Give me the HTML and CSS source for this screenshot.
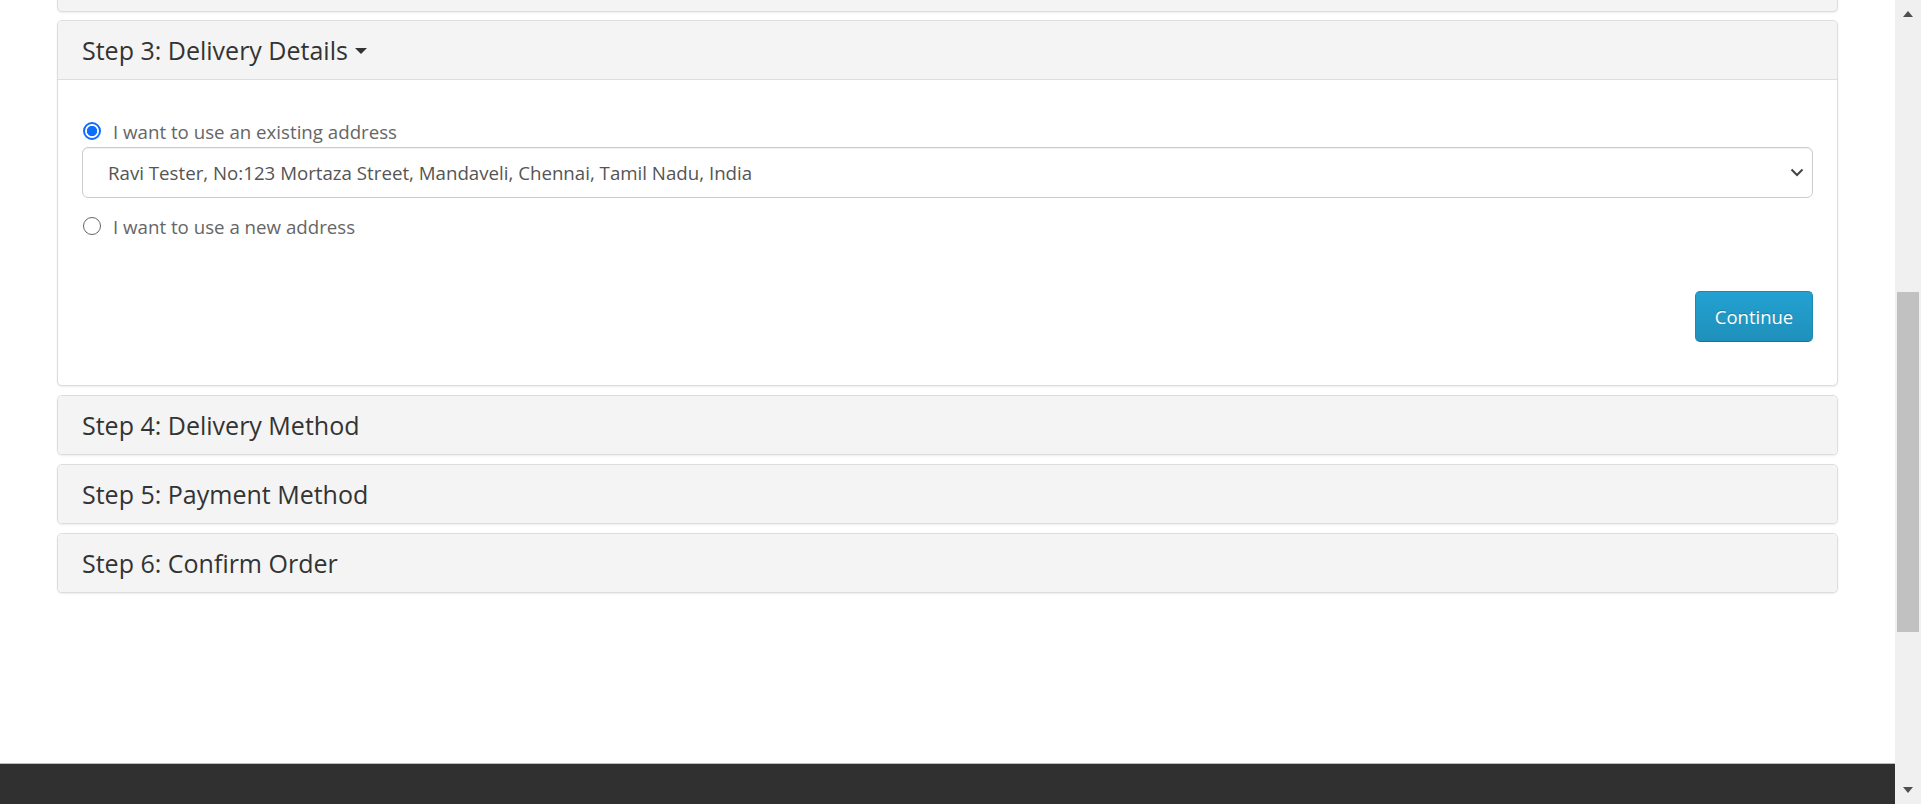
FILE: index.html
```html
<!DOCTYPE html>
<html lang="en">
<head>
<meta charset="utf-8">
<title>Checkout</title>
<link rel="stylesheet" href="styles.css">
</head>
<body>
<div class="page">
  <main class="content">
    <div class="panel panel-prev"></div>

    <section class="panel">
      <div class="panel-heading">
        <h4 class="panel-title">Step 3: Delivery Details <span class="caret"></span></h4>
      </div>
      <div class="panel-body">
        <label class="radio-row">
          <span class="radio radio-checked"></span>
          <span class="radio-label">I want to use an existing address</span>
        </label>
        <div class="select">
          <span class="select-text">Ravi Tester, No:123 Mortaza Street, Mandaveli, Chennai, Tamil Nadu, India</span>
          <svg class="chevron" width="14" height="9" viewBox="0 0 14 9"><path d="M1.5 1.5 L7 7 L12.5 1.5" fill="none" stroke="#444" stroke-width="2"/></svg>
        </div>
        <label class="radio-row radio-row-new">
          <span class="radio"></span>
          <span class="radio-label">I want to use a new address</span>
        </label>
        <div class="buttons">
          <button class="btn-primary" type="button">Continue</button>
        </div>
      </div>
    </section>

    <section class="panel panel-closed">
      <div class="panel-heading"><h4 class="panel-title">Step 4: Delivery Method</h4></div>
    </section>
    <section class="panel panel-closed">
      <div class="panel-heading"><h4 class="panel-title">Step 5: Payment Method</h4></div>
    </section>
    <section class="panel panel-closed">
      <div class="panel-heading"><h4 class="panel-title">Step 6: Confirm Order</h4></div>
    </section>
  </main>
  <footer class="footer"></footer>
</div>
<div class="scrollbar">
  <div class="sb-arrow sb-up"></div>
  <div class="sb-track"><div class="sb-thumb"></div></div>
  <div class="sb-arrow sb-down"></div>
</div>
</body>
</html>
```
FILE: styles.css
```css
* { box-sizing: border-box; }
html, body { margin: 0; padding: 0; }
body {
  width: 1921px;
  height: 804px;
  overflow: hidden;
  display: flex;
  background: #fff;
  font-family: "Open Sans", "Liberation Sans", sans-serif;
  color: #333;
}
.page {
  flex: 1;
  display: flex;
  flex-direction: column;
  min-width: 0;
}
.content {
  flex: 1;
  padding: 0 57px;
  display: flex;
  flex-direction: column;
  gap: 8px;
}
.panel {
  border: 1px solid #ddd;
  border-radius: 5px;
  background: #fff;
  box-shadow: 0 1px 2px rgba(0,0,0,0.08);
}
.panel-prev {
  height: 12px;
  border-top: none;
  border-top-left-radius: 0;
  border-top-right-radius: 0;
  background: #f4f4f4;
}
.panel-heading {
  height: 59px;
  background: #f4f4f4;
  border-bottom: 1px solid #ddd;
  border-radius: 5px 5px 0 0;
  padding: 0 24px;
  display: flex;
  align-items: center;
}
.panel-closed { margin-top: 1px; }
.panel-closed .panel-heading {
  height: 58px;
  border-bottom: none;
  border-radius: 5px;
}
.panel-title {
  margin: 0;
  font-size: 25px;
  font-weight: 400;
  color: #333;
  display: flex;
  align-items: center;
}
.caret {
  display: inline-block;
  margin-left: 7px;
  margin-top: 2px;
  width: 0;
  height: 0;
  border-left: 6px solid transparent;
  border-right: 6px solid transparent;
  border-top: 6px solid #333;
}
.panel-body {
  padding: 39px 24px 43px 24px;
  display: flex;
  flex-direction: column;
}
.radio-row {
  display: flex;
  align-items: center;
  height: 24px;
  gap: 12px;
}
.radio {
  width: 18px;
  height: 18px;
  border-radius: 50%;
  border: 1.5px solid #666;
  background: #fff;
  flex: none;
  margin-left: 1px;
}
.radio-checked {
  border: 2px solid #0d6efd;
  background: radial-gradient(circle, #0d6efd 0 4.8px, #fff 5.5px);
}
.radio-label {
  font-size: 18.7px;
  color: #666;
}
.select {
  margin-top: 4px;
  height: 51px;
  border: 1px solid #ccc;
  border-radius: 6px;
  background: #fff;
  padding: 0 8px 0 25px;
  display: flex;
  align-items: center;
  justify-content: space-between;
  box-shadow: inset 0 1px 1px rgba(0,0,0,0.06);
}
.select-text {
  font-size: 18.7px;
  color: #555;
}
.chevron { flex: none; }
.radio-row-new { margin-top: 16px; }
.buttons {
  margin-top: 53px;
  display: flex;
  justify-content: flex-end;
}
.btn-primary {
  width: 118px;
  height: 51px;
  border: 1px solid #1f87b0;
  border-bottom-color: #1a6f92;
  border-radius: 5px;
  background: linear-gradient(to bottom, #23a1d1, #1f90bb);
  color: #fff;
  font-family: "Open Sans", "Liberation Sans", sans-serif;
  font-size: 18.5px;
  text-shadow: 0 -1px 0 rgba(0,0,0,0.2);
  padding: 0;
}
.footer {
  height: 41px;
  background: #303030;
  border-top: 1px solid #bdbdbd;
  flex: none;
}
.scrollbar {
  width: 26px;
  flex: none;
  background: #f0f0f0;
  display: flex;
  flex-direction: column;
  align-items: center;
}
.sb-arrow {
  height: 28px;
  flex: none;
  display: flex;
  align-items: center;
  justify-content: center;
  width: 100%;
}
.sb-up::before {
  content: "";
  border-left: 5px solid transparent;
  border-right: 5px solid transparent;
  border-bottom: 6px solid #505050;
}
.sb-down::before {
  content: "";
  border-left: 5px solid transparent;
  border-right: 5px solid transparent;
  border-top: 6px solid #505050;
}
.sb-track {
  flex: 1;
  width: 100%;
  padding: 264px 2px 0 2px;
}
.sb-thumb {
  height: 340px;
  background: #c1c1c1;
}
```
